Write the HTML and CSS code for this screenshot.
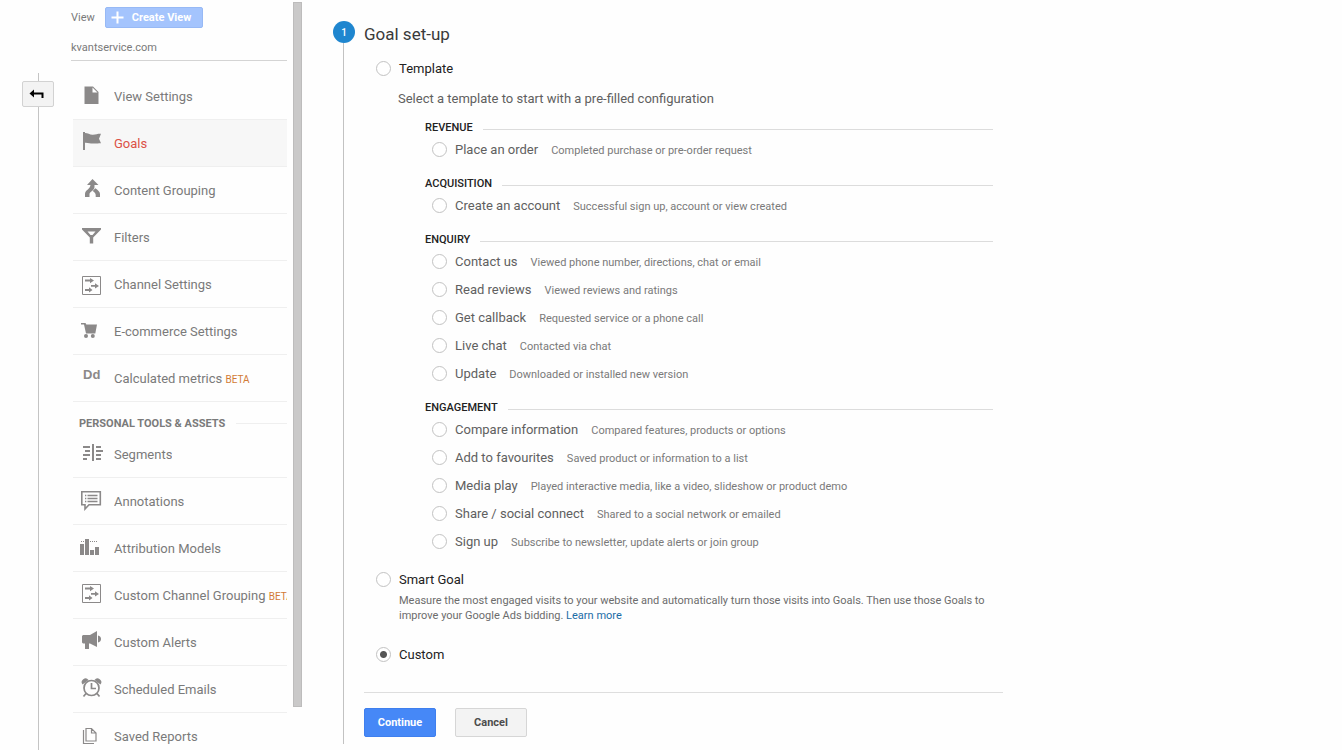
FILE: index.html
```html
<!DOCTYPE html>
<html lang="en">
<head>
<meta charset="utf-8">
<title>Goal set-up</title>
<link rel="stylesheet" href="styles.css">
</head>
<body>
<div class="app">
  <div class="rail">
    <button class="back" type="button" aria-label="Back">
      <svg width="16" height="12" viewBox="0 0 16 12"><path d="M0.500 5.500 5 1.500v3h9.500v5.500h-2V6.500H5v3z" fill="#000"/></svg>
    </button>
  </div>

  <aside class="side">
    <div class="view-head">
      <span>View</span>
      <button class="create" type="button">
        <svg width="13" height="13" viewBox="0 0 13 13"><path d="M6.500 0.500v12M0.500 6.500h12" stroke="#fff" stroke-width="2"/></svg>
        Create View
      </button>
    </div>
    <div class="view-name">kvantservice.com</div>

    <nav class="nav">
      <a class="item" href="#"><svg class="icon" viewBox="0 0 24 24"><path d="M4.500 3.500H13l5.500 5.500v12h-14z" fill="#8b8989"/><path d="M12.500 4.500V9.500h5z" fill="#fff"/></svg><span class="text">View Settings</span></a>
      <a class="item active" href="#"><svg class="icon" viewBox="0 0 24 24"><path d="M3 2h2v1c3 0 5 2 8 1.700 3-.3 5-1.200 8-1l-2 5 2 4.500c-3 0-5 .5-8 .3-3 0-5-1-8-.8V20H3z" fill="#8b8989"/></svg><span class="text">Goals</span></a>
      <a class="item" href="#"><svg class="icon" viewBox="0 0 24 24"><path d="M12.500 2 18.500 8H14.500v2c0 4-5 4-5 7.500V20H5v-3c0-4 5-4.500 5.500-9H7z" fill="#8b8989"/><path d="m15.300 11.200-2.600 2.800c2 1.200 3 2.500 3 4V20H20v-3c0-2.500-2.200-4-4.700-5.800z" fill="#8b8989"/></svg><span class="text">Content Grouping</span></a>
      <a class="item" href="#"><svg class="icon" viewBox="0 0 24 24"><path fill-rule="evenodd" d="M2 4h19v1.500L13.200 13.500V19.500h-3.400V13.500L2 5.500zM7.500 7.500l3 3.500h2l3-3.500z" fill="#8b8989"/></svg><span class="text">Filters</span></a>
      <a class="item" href="#"><svg class="icon" viewBox="0 0 24 24"><path d="M2.500 5.500h18v18h-18z" fill="none" stroke="#8b8989"/><path d="M5 8.500h5V7l4 2.500L10 12.200v-1.700H5zM11 14h4v-1.700l4 2.700-4 2.500v-1.700h-4zM5 18h4v-1.700l3.500 2.700L9 21.500V20H5z" fill="#8b8989"/></svg><span class="text">Channel Settings</span></a>
      <a class="item" href="#"><svg class="icon" viewBox="0 0 24 24"><path d="M1 5h4.500l.8 1.500H17l-1.700 9H6L4 6.500H1z" fill="#8b8989"/><circle cx="6" cy="18" r="2" fill="#8b8989"/><circle cx="12.800" cy="18" r="2" fill="#8b8989"/></svg><span class="text">E-commerce Settings</span></a>
      <a class="item" href="#"><span class="icon dd">Dd</span><span class="text">Calculated metrics <small class="beta">BETA</small></span></a>

      <h2 class="section">Personal tools &amp; assets</h2>

      <a class="item" href="#"><svg class="icon" viewBox="0 0 24 24"><path d="M3 6h7M5 10h5M3 14h7M3 18h4M16 6h5M16 10h7M16 14h5M16 18h5" stroke="#8b8989" stroke-width="2"/><path d="M13 3v17" stroke="#8b8989" stroke-width="2"/></svg><span class="text">Segments</span></a>
      <a class="item" href="#"><svg class="icon" viewBox="0 0 24 24"><path d="M1.800 3.800h18.500v13H9L5 21v-4.200H1.800z" fill="none" stroke="#8b8989" stroke-width="1.600"/><path d="M5 7.500h1.300M7.500 7.500h10M5 10.500h1.300M7.500 10.500h10M5 13.500h1.300M7.500 13.500h10" stroke="#8b8989" stroke-width="1.500"/></svg><span class="text">Annotations</span></a>
      <a class="item" href="#"><svg class="icon" viewBox="0 0 24 24"><path d="M0 9h4v11H0zM5 4h4v16H5zM10 15h4v5h-4zM15 12h4v8h-4z" fill="#8b8989"/><path d="M1 6.500h4M10 6.500h8" stroke="#8b8989" stroke-dasharray="1 1"/></svg><span class="text">Attribution Models</span></a>
      <a class="item" href="#"><svg class="icon" viewBox="0 0 24 24"><path d="M2.500 2.500h18v18h-18z" fill="none" stroke="#8b8989"/><path d="M5 5.500h5V4l4 2.500L10 9.200V7.500H5zM11 11h4V9.300l4 2.700-4 2.500v-1.700h-4zM5 15h4v-1.700l3.500 2.700L9 18.500V17H5z" fill="#8b8989"/></svg><span class="text">Custom Channel Grouping <small class="beta">BETA</small></span></a>
      <a class="item" href="#"><svg class="icon" viewBox="0 0 24 24"><path d="M3 6h7l7-4v16l-7-3.500H9V20H5v-5.500H3L2 13.500V7z" fill="#8b8989"/><path d="M18 6.500c4 .5 4 6.500 0 7z" fill="#8b8989"/></svg><span class="text">Custom Alerts</span></a>
      <a class="item" href="#"><svg class="icon" viewBox="0 0 24 24"><circle cx="11.500" cy="12" r="7.500" fill="none" stroke="#8b8989" stroke-width="1.700"/><path d="M11.500 7v5.500H16M6 17.500l-2.500 3M17 17.500l2.500 3" fill="none" stroke="#8b8989" stroke-width="1.700"/><path d="M2.500 8.500a3.300 3.300 0 1 1 6-4.500zM20.500 8.500a3.300 3.300 0 1 0-6-4.500z" fill="#8b8989"/></svg><span class="text">Scheduled Emails</span></a>
      <a class="item" href="#"><svg class="icon" viewBox="0 0 24 24"><path d="M6 5.500h5.500l4.500 4.500v8H6zM11.500 5.500V10H16M3.500 7v13.500H14" fill="none" stroke="#8b8989" stroke-width="1.200"/></svg><span class="text">Saved Reports</span></a>
    </nav>
  </aside>
  <div class="bar"></div>

  <main class="main">
    <div class="steps"><span class="badge">1</span><span class="line"></span></div>
    <form class="content">
      <h1 class="title">Goal set-up</h1>
      <label class="choice"><input class="radio" type="radio" name="goal">Template</label>
      <p class="hint">Select a template to start with a pre-filled configuration</p>

      <div class="groups">
        <h3 class="group">Revenue</h3>
        <label class="option"><input class="radio" type="radio" name="goal">Place an order<span class="note">Completed purchase or pre-order request</span></label>
        <h3 class="group">Acquisition</h3>
        <label class="option"><input class="radio" type="radio" name="goal">Create an account<span class="note">Successful sign up, account or view created</span></label>
        <h3 class="group">Enquiry</h3>
        <label class="option"><input class="radio" type="radio" name="goal">Contact us<span class="note">Viewed phone number, directions, chat or email</span></label>
        <label class="option"><input class="radio" type="radio" name="goal">Read reviews<span class="note">Viewed reviews and ratings</span></label>
        <label class="option"><input class="radio" type="radio" name="goal">Get callback<span class="note">Requested service or a phone call</span></label>
        <label class="option"><input class="radio" type="radio" name="goal">Live chat<span class="note">Contacted via chat</span></label>
        <label class="option"><input class="radio" type="radio" name="goal">Update<span class="note">Downloaded or installed new version</span></label>
        <h3 class="group">Engagement</h3>
        <label class="option"><input class="radio" type="radio" name="goal">Compare information<span class="note">Compared features, products or options</span></label>
        <label class="option"><input class="radio" type="radio" name="goal">Add to favourites<span class="note">Saved product or information to a list</span></label>
        <label class="option"><input class="radio" type="radio" name="goal">Media play<span class="note">Played interactive media, like a video, slideshow or product demo</span></label>
        <label class="option"><input class="radio" type="radio" name="goal">Share / social connect<span class="note">Shared to a social network or emailed</span></label>
        <label class="option"><input class="radio" type="radio" name="goal">Sign up<span class="note">Subscribe to newsletter, update alerts or join group</span></label>
      </div>

      <label class="choice"><input class="radio" type="radio" name="goal">Smart Goal</label>
      <p class="about">Measure the most engaged visits to your website and automatically turn those visits into Goals. Then use those Goals to improve your Google Ads bidding. <a class="link" href="#">Learn more</a></p>
      <label class="choice"><input class="radio" type="radio" name="goal" checked>Custom</label>

      <div class="actions">
        <button class="btn primary" type="button">Continue</button>
        <button class="btn" type="button">Cancel</button>
      </div>
    </form>
  </main>
</div>
</body>
</html>
```
FILE: styles.css
```css
* { box-sizing: border-box; }
body {
  margin: 0;
  background: #fefefe;
  color: #222;
  font: 13px/18px Roboto, "Liberation Sans", sans-serif;
}
h1, h2, h3, p { margin: 0; }
button { font-family: inherit; }
.app { display: flex; height: 100vh; overflow: hidden; }

/* left rail */
.rail {
  flex: none;
  width: 71px;
  margin-top: 73px;
  padding: 8px 0 0 22px;
  background: linear-gradient(#c4c4c4, #c4c4c4) 38px 0 / 1px 100% no-repeat;
}
.back {
  display: grid;
  place-content: center;
  width: 32px;
  height: 26px;
  padding: 0 2px 1px 0;
  border: 1px solid #d2d2d2;
  border-radius: 2px;
  background: #f3f3f3;
}

/* view column */
.side { flex: none; width: 216px; padding-top: 7px; color: #7a7a7a; }
.view-head { display: flex; align-items: center; gap: 10px; font-size: 11px; height: 21px; }
.create {
  display: flex;
  align-items: center;
  gap: 8px;
  height: 21px;
  padding: 0 11px 0 5px;
  border: 1px solid #97b9f5;
  border-radius: 2px;
  background: #a4c4fd;
  color: #fff;
  font-size: 11px;
  font-weight: 700;
}
.view-name {
  padding: 11px 0 3px;
  border-bottom: 1px solid #d4d4d4;
  font-size: 11px;
}
.nav { padding: 12px 0 0 2px; }
.item {
  display: flex;
  align-items: center;
  gap: 10px;
  height: 47px;
  padding-left: 7px;
  border-bottom: 1px solid #efefef;
  color: #7a7a7a;
  text-decoration: none;
  white-space: nowrap;
  overflow: hidden;
}
.active { background: #f7f7f7; color: #dc5146; }
.icon { flex: none; width: 24px; height: 24px; margin-bottom: 2px; }
.dd {
  padding-left: 3px;
  color: #8b8989;
  font: 700 13px/20px "Liberation Sans", sans-serif;
}
.text { overflow: hidden; padding-top: 1px; }
.beta { color: #d27b36; font-size: 10px; line-height: 1; }
.section {
  display: flex;
  align-items: center;
  gap: 11px;
  padding: 14px 0 0 6px;
  font-size: 11px;
  line-height: 15px;
  text-transform: uppercase;
}
.section::after { content: ""; flex: 1; border-top: 1px solid #efefef; }
.bar {
  flex: none;
  width: 9px;
  height: 94vh;
  margin: 2px 31px 0 6px;
  border: 1px solid #bdbcbc;
  background: #cac9c9;
}

/* goal form */
.main { display: flex; gap: 9px; flex: 1; align-self: flex-start; max-width: 670px; padding-top: 21px; }
.steps { display: flex; flex-direction: column; width: 22px; }
.badge {
  height: 22px;
  border-radius: 50%;
  background: #1f86cf;
  color: #fff;
  font-size: 10px;
  font-weight: 500;
  line-height: 23px;
  text-align: center;
}
.line { flex: 1; width: 1px; margin-left: 10px; background: #c2c2c2; }
.content { flex: 1; padding: 2px 0 7px; }
.title { font-size: 17px; font-weight: 400; line-height: 22px; margin-bottom: 15px; color: #3a3a3a; }
.choice { display: flex; align-items: center; gap: 8px; padding-left: 12px; }
.radio {
  appearance: none;
  flex: none;
  width: 15px;
  height: 15px;
  margin: 0 0 1px;
  border: 1px solid #c2c2c2;
  border-radius: 50%;
  background: #fff;
}
.radio:checked { background: radial-gradient(circle, #555 3px, #fff 4px); }
.hint { margin-top: 12px; padding-left: 34px; color: #606060; }
.groups { margin: 0 10px 15px 61px; }
.group {
  display: flex;
  align-items: center;
  gap: 10px;
  padding-top: 12px;
  font-size: 11px;
  font-weight: 500;
  line-height: 16px;
  text-transform: uppercase;
}
.group::after { content: ""; flex: 1; margin-top: 2px; border-top: 1px solid #dcdcdc; }
.option { display: flex; align-items: center; gap: 8px; height: 28px; padding-left: 7px; color: #606060; }
.note { margin-left: 5px; padding-top: 1px; color: #7a7a7a; font-size: 11px; }
.about { margin: 4px 0 23px; padding-left: 35px; color: #6c6c6c; font-size: 11px; line-height: 15px; }
.link { color: #1b6ca6; text-decoration: none; }
.actions { display: flex; gap: 19px; margin-top: 28px; padding-top: 15px; border-top: 1px solid #dedede; }
.btn {
  width: 72px;
  height: 29px;
  padding: 0;
  border: 1px solid #d6d6d6;
  border-radius: 2px;
  background: #f3f3f3;
  color: #4c4c4c;
  font-size: 11px;
  font-weight: 700;
}
.primary { border-color: #3f7fee; background: #4688f7; color: #fff; }
```
